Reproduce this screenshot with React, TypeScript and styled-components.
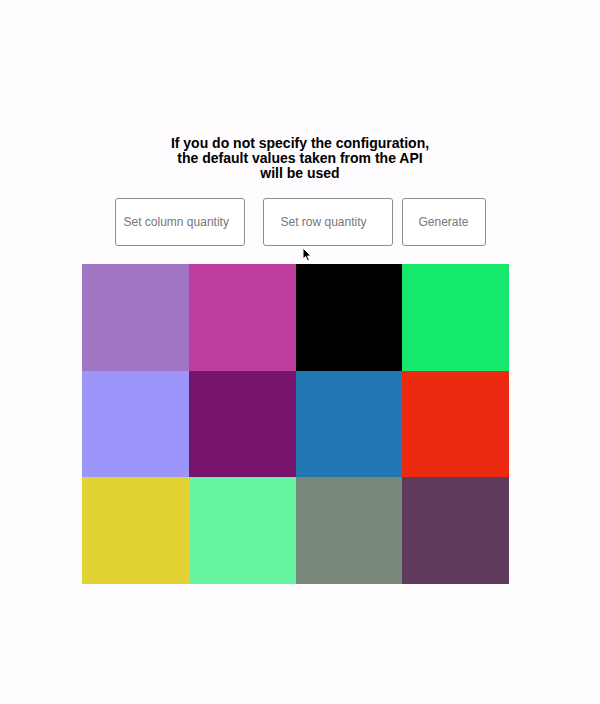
import React from "react";
import styled, { createGlobalStyle } from "styled-components";

const Global = createGlobalStyle`
  html, body { margin: 0; padding: 0; background: #fefcfe; }
  body { font-family: "Liberation Sans", Arial, sans-serif; }
`;

const Page = styled.div`
  position: relative;
  width: 600px;
  height: 704px;
  display: flex;
  flex-direction: column;
  align-items: center;
  padding-top: 136px;
  box-sizing: border-box;
`;

const Heading = styled.h1`
  margin: 0;
  font-size: 14px;
  line-height: 15px;
  font-weight: 700;
  color: #000;
  text-align: center;
`;

const Controls = styled.div`
  display: flex;
  align-items: center;
  margin-top: 17px;
`;

const Field = styled.input<{ $indent: number; $gap: number }>`
  box-sizing: border-box;
  width: 130px;
  height: 48px;
  border: 1px solid #8c8c8c;
  border-radius: 3px;
  background: #fff;
  padding: 0 0 0 ${(p) => p.$indent}px;
  margin-right: ${(p) => p.$gap}px;
  font-family: "Liberation Sans", Arial, sans-serif;
  font-size: 12px;
  color: #333;
  outline: none;
  &::placeholder { color: #777; }
`;

const Button = styled.button`
  box-sizing: border-box;
  width: 84px;
  height: 48px;
  border: 1px solid #8c8c8c;
  border-radius: 3px;
  background: #fff;
  font-family: "Liberation Sans", Arial, sans-serif;
  font-size: 12px;
  color: #777;
  padding: 0;
`;

const Grid = styled.div`
  display: grid;
  grid-template-columns: repeat(4, 106.67px);
  grid-auto-rows: 106.67px;
  margin-top: 18px;
  margin-right: 9px;
`;

const Cell = styled.div<{ $color: string }>`
  background: ${(p) => p.$color};
`;

const Cursor = styled.svg`
  position: absolute;
  left: 302px;
  top: 247px;
`;

const colors = [
  "#a076c2", "#be3c9d", "#000000", "#14e96e",
  "#9c96fb", "#77146c", "#2278b3", "#ec2a12",
  "#e3d234", "#66f4a1", "#7a887c", "#5f3a5d",
];

export default function App() {
  return (
    <>
      <Global />
      <Page>
        <Heading>
          If you do not specify the configuration,
          <br />
          the default values taken from the API
          <br />
          will be used
        </Heading>
        <Controls>
          <Field $indent={8} $gap={18} placeholder="Set column quantity" />
          <Field $indent={17} $gap={9} placeholder="Set row quantity" />
          <Button>Generate</Button>
        </Controls>
        <Grid>
          {colors.map((c, i) => (
            <Cell key={i} $color={c} />
          ))}
        </Grid>
        <Cursor width="11" height="15" viewBox="0 0 11 15">
          <path d="M1 1 L1 12 L3.6 9.6 L5.6 14 L7.4 13.2 L5.5 9 L9 9 Z" fill="#000" stroke="#fff" strokeWidth="1" />
        </Cursor>
      </Page>
    </>
  );
}
